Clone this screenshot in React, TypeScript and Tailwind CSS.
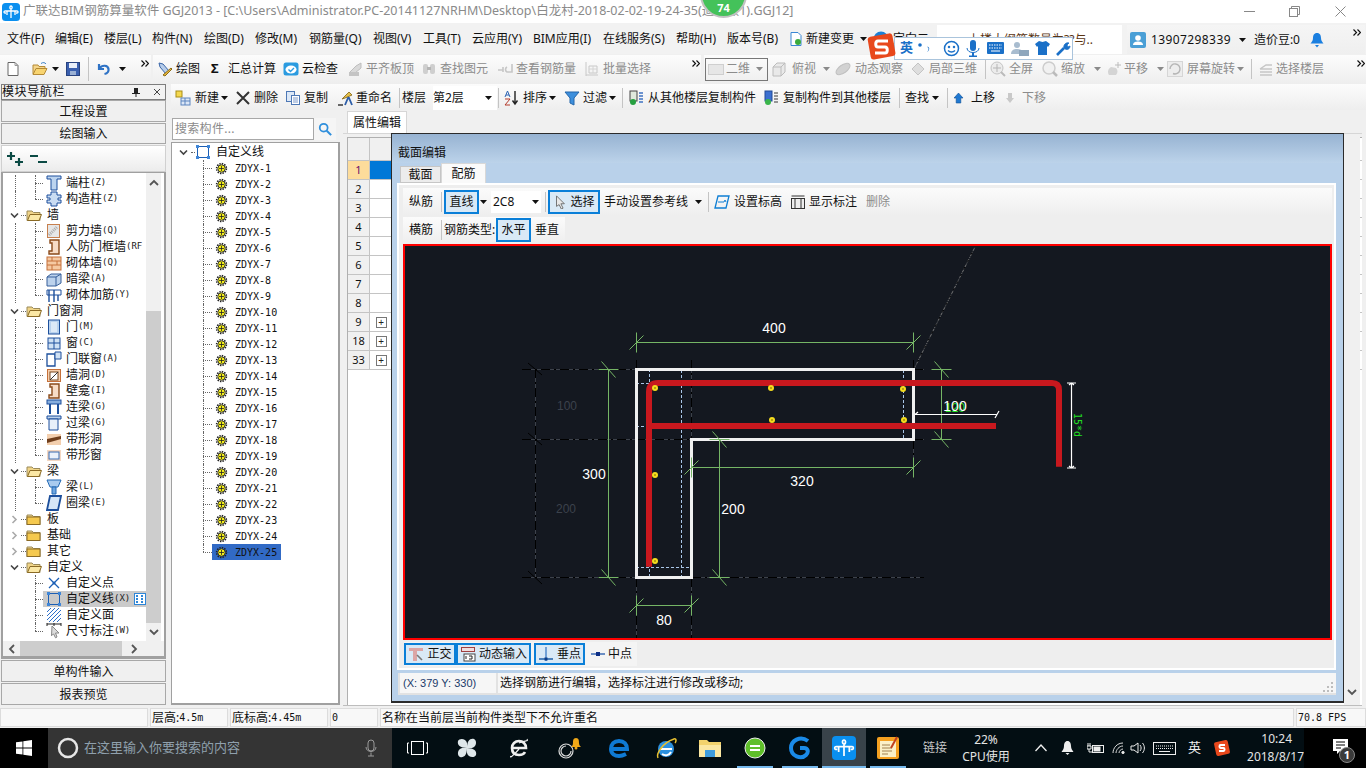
import React from "react";

const FONT = "[font-family:'Noto_Sans','Noto_Sans_CJK_SC',sans-serif]";
const MONO = "[font-family:'DejaVu_Sans_Mono','Liberation_Mono',monospace]";

function S({ s = 16, children, cls = "" }: { s?: number; children: React.ReactNode; cls?: string }) {
  return (
    <svg width={s} height={s} viewBox="0 0 16 16" className={"shrink-0 " + cls} fill="none">
      {children}
    </svg>
  );
}

const Caret = ({ cls = "", gray = false }: { cls?: string; gray?: boolean }) => (
  <svg width="7" height="4" viewBox="0 0 7 4" className={"shrink-0 " + cls}>
    <path d="M0 0h7L3.5 4z" fill={gray ? "#8a8a8a" : "#111"} />
  </svg>
);

const More = ({ cls = "" }: { cls?: string }) => (
  <svg width="8" height="7" viewBox="0 0 8 7" className={"shrink-0 " + cls} fill="none" stroke="#111" strokeWidth="1.2">
    <path d="M0.5 0.5l3 3-3 3M4.5 0.5l3 3-3 3" />
  </svg>
);

/* ---- toolbar icons ---- */
const icons: Record<string, React.ReactNode> = {
  doc: <><path d="M3 1.5h7l3 3v10H3z" fill="#fff" stroke="#666" /><path d="M10 1.5v3h3" stroke="#999" /></>,
  open: <><path d="M1 13V4h5l1 1.5h6V8" fill="#f4d58a" stroke="#b58a35" /><path d="M1 13.5l3-6h11l-3 6z" fill="#f8d470" stroke="#b58a35" /><path d="M9 2.5c2-1.5 4-1 5 .5" stroke="#3a7fc4" /></>,
  save: <><rect x="1.5" y="1.5" width="13" height="13" fill="#3a5fae" stroke="#27427f" /><rect x="4" y="2" width="8" height="5" fill="#e8eef8" /><rect x="5" y="10" width="6" height="4" fill="#9ab0d4" /></>,
  undo: <path d="M3 3v5h5M3.5 7.5C6 3.5 12 4 12.5 8c.3 2.5-1.5 4.5-4 5" stroke="#2f73c6" strokeWidth="2.2" />,
  draw: <><path d="M2 2l4 1 6 7-3 3-6-7z" fill="#b7cdea" stroke="#3a66a8" /><path d="M6 14l8-7 1 1-7 7z" fill="#e9b93f" stroke="#8c6b14" /></>,
  cloud: <><rect x="0.5" y="1.5" width="15" height="13" rx="2.5" fill="#2b9be0" /><ellipse cx="8" cy="8.5" rx="5.5" ry="4" fill="#fff" /><path d="M5.5 8.5l2 2 3.5-3.5" stroke="#2b9be0" strokeWidth="1.4" /></>,
  align: <><path d="M2 12l7-7 5-3v5l-6 5z" fill="#d9d9d9" stroke="#bdbdbd" /><rect x="2" y="11" width="10" height="4" fill="#c4c4c4" /></>,
  find: <><rect x="2" y="3" width="5" height="10" rx="2" fill="#cfcfcf" /><rect x="9" y="3" width="5" height="10" rx="2" fill="#cfcfcf" /><rect x="6" y="6" width="4" height="3" fill="#b5b5b5" /></>,
  rebar: <path d="M1 9h5M6 6v5M10 6c-2 1-2 4 0 5h5V3" stroke="#c6c6c6" strokeWidth="1.6" />,
  batch: <><path d="M2 1v14M2 14h12M5 5h8v7H5z" stroke="#c8c8c8" /><path d="M5 8h8M9 5v7" stroke="#d4d4d4" /></>,
  box: <><path d="M2 6l4-4h8v9l-4 4H2z" fill="#e9e9e9" stroke="#bcbcbc" /><path d="M2 6h8v9M10 6l4-4" stroke="#bcbcbc" /></>,
  orbit: <ellipse cx="8" cy="8" rx="8" ry="4" transform="rotate(-35 8 8)" fill="#d2d2d2" stroke="#c0c0c0" />,
  part3d: <path d="M2 8l6-6 6 6-6 6z" fill="#dedede" stroke="#c4c4c4" />,
  full: <><circle cx="7" cy="7" r="6" fill="#ececec" stroke="#c4c4c4" /><path d="M7 3v8M3 7h8" stroke="#b5b5b5" /><path d="M11 11l4 4" stroke="#bbb" strokeWidth="2" /></>,
  zoom: <><circle cx="7" cy="7" r="6" fill="#f1f1f1" stroke="#cdcdcd" strokeWidth="1.5" /><path d="M11 11l4 4" stroke="#bbb" strokeWidth="2.5" /></>,
  pan: <><path d="M3 14c-2-3-1-6 2-8l5 1c2 2 2 5 0 7z" fill="#d4d4d4" /><path d="M12 1v6M9 4h6" stroke="#bcbcbc" /></>,
  rotate: <><rect x="0.5" y="0.5" width="15" height="15" fill="#ededed" stroke="#d6d6d6" /><path d="M3 8a5 5 0 1 1 3 4.5" stroke="#b5b5b5" strokeWidth="1.4" /></>,
  floor: <path d="M2 8l6-4h6M2 8h12M2 11h12M2 14h12" stroke="#c6c6c6" strokeWidth="1.4" />,
  newc: <><rect x="1" y="1" width="6" height="6" fill="#f5d84f" stroke="#a88d17" /><rect x="6" y="8" width="9" height="7" fill="#dbe6f6" stroke="#5d85bf" /><path d="M6 11h9M10 8v7" stroke="#5d85bf" /></>,
  del: <path d="M2 2l12 12M14 2L2 14" stroke="#333" strokeWidth="2" />,
  copy: <><rect x="1.5" y="1.5" width="8" height="10" fill="#dce8f7" stroke="#4e78b5" /><rect x="6.5" y="5.5" width="8" height="9" fill="#fff" stroke="#4e78b5" /><path d="M8 8h5M8 10h5M8 12h5" stroke="#7c9acb" /></>,
  rename: <><path d="M5 9l7-7 3 3-7 3z" fill="#e3c04b" stroke="#96782a" /><path d="M8 15l3-7h1l3 7" stroke="#2e5ea8" strokeWidth="1.8" /><path d="M1 15h5" stroke="#666" strokeWidth="2" /></>,
  sort: <><path d="M12 1v12M9.5 10.5l2.5 3.5 2.5-3.5" stroke="#222" strokeWidth="1.4" /><path d="M2 7l2.5-6L7 7M3 5h3" stroke="#2b63b3" /><path d="M2 9h5l-5 6h5" stroke="#b33a2b" /></>,
  filter: <path d="M1 2h14l-5 6v7l-4-2V8z" fill="#3d8fdc" stroke="#2567ab" />,
  copyin: <><rect x="2" y="1" width="7" height="10" fill="#dfe9dc" stroke="#444" /><circle cx="5" cy="12" r="3" fill="#26a040" /><path d="M11 3h4M11 6h4M11 9h4M11 12h4" stroke="#3f73c2" strokeWidth="1.4" /></>,
  copyout: <><rect x="2" y="1" width="7" height="10" fill="#3b6fd0" stroke="#234a96" /><circle cx="5" cy="12" r="3" fill="#39b54a" /><path d="M11 3h4M11 6h4M11 9h4M11 12h4" stroke="#777" strokeWidth="1.4" /></>,
  up: <path d="M4.500 3l4.500 5H6.800v5H2.200V8H0z" fill="#1f78d1" stroke="#0d4f96" strokeWidth="0.6" />,
  down: <path d="M6 13L2 8h2V3h4v5h2z" fill="#c9c9c9" />,
  change: <><path d="M3 1.5h7l3 3v10H3z" fill="#fff" stroke="#3a87d4" /><circle cx="10" cy="11" r="3" fill="#3cab3c" /></>,
  search: <><circle cx="6.5" cy="6.5" r="4.5" stroke="#2f8fdc" strokeWidth="2" /><path d="M10 10l5 5" stroke="#2f8fdc" strokeWidth="2.4" /></>,
  cursor: <path d="M4 1l9 9H9l2.5 5-2 1-2.5-5L4 13z" fill="#e8e8e8" stroke="#666" />,
  level: <><path d="M1 14l3-12h11l-3 12z" stroke="#0f7fd4" strokeWidth="1.3" /><path d="M4 8h6l1-2 1 2" stroke="#0f7fd4" /></>,
  showdim: <><rect x="1.5" y="4.5" width="13" height="10" fill="#ededed" stroke="#333" /><path d="M1.5 2h13M5 5v9M11 5v9" stroke="#333" /></>,
  ortho: <><path d="M1 2h14v3H9v10H5V5H1z" fill="#dca5a5" /><path d="M9 9l5 5" stroke="#777" strokeWidth="1.6" /></>,
  dyn: <><rect x="1.5" y="1.5" width="13" height="4" fill="#f0dede" stroke="#a04040" /><rect x="4" y="8" width="11" height="7" fill="#fff" stroke="#444" /><path d="M6 13V10M9 10h3v3H9" stroke="#222" /></>,
  perp: <><path d="M8 1v14" stroke="#4f89cb" strokeWidth="1.5" /><path d="M1 13h14" stroke="#1f5fa8" strokeWidth="1.5" /><rect x="6.5" y="11.5" width="3" height="3" fill="#0d3d86" /></>,
  mid: <><path d="M1 8h14" stroke="#3e6db5" strokeWidth="1.5" /><rect x="6" y="6" width="4" height="4" fill="#0d2f86" /></>,
};
const I = ({ k, s = 16, cls = "" }: { k: string; s?: number; cls?: string }) => <S s={s} cls={cls}>{icons[k]}</S>;

function Tool({ k, label, w, gray, caret, gap = "ml-[3px]" }: { k?: string; label?: string; w: string; gray?: boolean; caret?: string; gap?: string }) {
  return (
    <div className={"flex items-center h-full shrink-0 relative " + w}>
      {k && <I k={k} />}
      {label && <span className={"whitespace-nowrap " + gap + " " + (gray ? "text-[#8c8c8c]" : "text-[#111]")}>{label}</span>}
      {caret && <Caret gray={gray} cls={caret} />}
    </div>
  );
}
const Sep = ({ cls = "" }: { cls?: string }) => <div className={"w-px h-[20px] bg-[#c4c4c4] shrink-0 " + cls} />;

/* ---- tree icons ---- */
const treeIcons: Record<string, React.ReactNode> = {
  duan: <><path d="M1 1h14v3h-4v11H5V4H1z" fill="#bcd4ef" stroke="#1c4f9c" /></>,
  gz: <path d="M5 1h6v3h4v3h-3v2h3v3h-4v3H5v-3H1V9h3V7H1V4h4z" fill="#c9dcf2" stroke="#1c4f9c" />,
  shear: <><rect x="1.5" y="1.5" width="12" height="13" fill="#e6e6e6" stroke="#c77f4d" /><path d="M3 12l8-8" stroke="#aaa" strokeDasharray="1 1" strokeWidth="3" /></>,
  door2: <path d="M4 1h9v14H3v-3h3V4H4z" fill="#f7dcc6" stroke="#8a4a1a" strokeWidth="1.4" />,
  brick: <><rect x="1" y="2" width="14" height="13" fill="#f5c9a2" stroke="#c5703a" /><path d="M1 6h14M1 10h14M6 2v4M11 6v4M6 10v5" stroke="#c5703a" /></>,
  an: <><path d="M1 6l4-3h10v9l-5 3H1z" fill="#bcd2ec" stroke="#365f9a" /><path d="M1 6h9v9M10 6l5-3" stroke="#365f9a" /></>,
  jj: <><path d="M1 3h14v5H1z" fill="#fff" stroke="#1c4f9c" /><path d="M3 3v12M8 3v12M12 8v6" stroke="#1c4f9c" strokeWidth="1.4" /></>,
  door: <><rect x="2.5" y="1" width="11" height="14" fill="#b9d2ee" stroke="#1c4f9c" /><rect x="5" y="3" width="6" height="10" fill="#dce9f7" /></>,
  win: <><rect x="2" y="3" width="12" height="11" fill="#cfe1f4" stroke="#1c4f9c" /><path d="M8 3v11M2 8h12" stroke="#1c4f9c" /></>,
  dw: <><path d="M1 3h8v12H1z" fill="#fff" stroke="#1c4f9c" strokeWidth="1.3" /><path d="M9 1h6v7H9z" fill="#cfe1f4" stroke="#1c4f9c" /></>,
  hole: <><rect x="1.5" y="2.5" width="13" height="12" fill="#f5cfae" stroke="#c5703a" /><rect x="4" y="5" width="8" height="8" fill="#fff" stroke="#7a4a20" /><path d="M4 13l8-8" stroke="#333" /></>,
  ll: <><rect x="1" y="1" width="14" height="4" fill="#87aede" stroke="#1c4f9c" /><path d="M4 5v10M12 5v10" stroke="#1c4f9c" strokeWidth="2" /></>,
  gl: <><path d="M1 1h14v3H1z" fill="#bcd2ec" stroke="#1c4f9c" /><path d="M3 4h9v11H3z" fill="#e8f0fa" stroke="#1c4f9c" /></>,
  bh: <><rect x="1" y="3" width="14" height="11" fill="#f3cfae" /><path d="M1 8l14-3v3L1 12z" fill="#6f3e1c" /></>,
  bw: <><rect x="1" y="3" width="14" height="11" fill="#f3d7c2" /><rect x="3" y="5" width="10" height="7" fill="#eaf1fb" stroke="#3b6db2" /></>,
  beam: <><path d="M1 1h14l-3 7H4z" fill="#a9cbef" stroke="#2269b4" /><path d="M6 8h4v7H6z" fill="#6ea6e0" stroke="#2269b4" /></>,
  ring: <path d="M4 1h11l-3 14H1z" fill="#d6e6f7" stroke="#1c4f9c" strokeWidth="1.8" />,
  point: <><path d="M3 3l10 10M13 3L3 13" stroke="#1c5fb5" strokeWidth="1.3" /><circle cx="8" cy="8" r="1.5" fill="#1c5fb5" /></>,
  line: <><rect x="2.5" y="2.5" width="11" height="11" stroke="#1c5fb5" /><rect x="1" y="1" width="3" height="3" fill="#3f86d8" /><rect x="12" y="1" width="3" height="3" fill="#3f86d8" /><rect x="1" y="12" width="3" height="3" fill="#3f86d8" /><rect x="12" y="12" width="3" height="3" fill="#3f86d8" /></>,
  face: <path d="M1 5l4-4M1 9l8-8M1 13L13 1M3 15L15 3M7 15l8-8M11 15l4-4" stroke="#2c6fca" />,
  dim: <><path d="M1 1h14M1 0v3M8 0v3M15 0v3" stroke="#222" /><path d="M6 3l7 7H9.5l1.5 4-1.5.8-2-4-2 2z" fill="#dcdcdc" stroke="#888" /></>,
  gear: <><circle cx="8" cy="8" r="4.5" fill="#f5ee1a" stroke="#222" /><circle cx="8" cy="8" r="6" stroke="#222" strokeWidth="2" strokeDasharray="1.8 1.3" /><path d="M8 5v6M5 8h6" stroke="#222" /></>,
};

const Folder = ({ open }: { open?: boolean }) => (
  <S>
    <path d="M1 13.5V4h5l1.5 1.5H14v8z" fill="#f0d488" stroke="#9a8a5a" />
    {open ? <path d="M1.5 13.5L4 7.5h11.5l-2.5 6z" fill="#fbe8a5" stroke="#8a6a25" /> : <rect x="1" y="6" width="13" height="7.5" fill="#f5c94f" stroke="#8a6a25" />}
  </S>
);

const Chev = ({ open }: { open?: boolean }) => (
  <svg width="9" height="9" viewBox="0 0 9 9" fill="none" strokeWidth="1.6" stroke={open ? "#444" : "#aaa"} className="shrink-0">
    {open ? <path d="M1 2.5l3.5 3.5L8 2.5" /> : <path d="M2.5 1L6 4.5 2.5 8" />}
  </svg>
);

const Guide = ({ last, w = "w-[11px]" }: { last?: boolean; w?: string }) => (
  <span className={"relative h-4 shrink-0 " + w}>
    <span className={"absolute left-0 top-0 border-l border-dotted border-[#666] " + (last ? "h-2" : "h-4")} />
    <span className="absolute left-0 top-2 w-full border-t border-dotted border-[#666]" />
  </span>
);

type Row =
  | { t: "g"; name: string; open?: boolean; more?: boolean }
  | { t: "c"; name: string; key2?: string; i: string; last?: boolean; sel?: boolean; more: boolean };

const c = (name: string, key2: string, i: string, more = true, last = false, sel = false): Row => ({ t: "c", name, key2, i, more, last, sel });
const navRows: Row[] = [
  c("端柱", "(Z)", "duan"),
  c("构造柱", "(Z)", "gz", true, true),
  { t: "g", name: "墙", open: true, more: true },
  c("剪力墙", "(Q)", "shear"),
  c("人防门框墙", "(RF", "door2"),
  c("砌体墙", "(Q)", "brick"),
  c("暗梁", "(A)", "an"),
  c("砌体加筋", "(Y)", "jj", true, true),
  { t: "g", name: "门窗洞", open: true, more: true },
  c("门", "(M)", "door"),
  c("窗", "(C)", "win"),
  c("门联窗", "(A)", "dw"),
  c("墙洞", "(D)", "hole"),
  c("壁龛", "(I)", "door2"),
  c("连梁", "(G)", "ll"),
  c("过梁", "(G)", "gl"),
  c("带形洞", "", "bh"),
  c("带形窗", "", "bw", true, true),
  { t: "g", name: "梁", open: true, more: true },
  c("梁", "(L)", "beam"),
  c("圈梁", "(E)", "ring", true, true),
  { t: "g", name: "板", more: true },
  { t: "g", name: "基础", more: true },
  { t: "g", name: "其它", more: true },
  { t: "g", name: "自定义", open: true },
  c("自定义点", "", "point", false),
  c("自定义线", "(X)", "line", false, false, true),
  c("自定义面", "", "face", false),
  c("尺寸标注", "(W)", "dim", false, true),
];

function NavRow({ r }: { r: Row }) {
  if (r.t === "g")
    return (
      <div className="flex h-4 items-center shrink-0">
        <span className="w-[7px] shrink-0" />
        <Chev open={r.open} />
        <span className="w-[2px] shrink-0" />
        <span className="w-[5px] border-t border-dotted border-[#666] shrink-0" />
        <Folder open={r.open} />
        <span className="ml-[5px] text-[12px] text-[#111] whitespace-nowrap">{r.name}</span>
      </div>
    );
  return (
    <div className="flex h-4 items-center shrink-0">
      <span className="w-[12px] shrink-0" />
      <span className={"w-[20px] h-4 shrink-0 " + (r.more ? "border-l border-dotted border-[#666]" : "")} />
      <Guide last={r.last} w="w-[8px]" />
      <span className={"pl-[3px] h-4 flex items-center grow min-w-0 overflow-hidden text-[12px] text-[#111] whitespace-nowrap " + (r.sel ? "bg-[#cacaca]" : "")}>
        <S>{treeIcons[r.i]}</S>
        <span className="ml-[4px] flex items-center">
          {r.name}
          {r.key2 && <span className={MONO + " text-[9px] text-[#222]"}>{r.key2}</span>}
        </span>
        {r.sel && (
          <svg width="12" height="12" viewBox="0 0 12 12" className="ml-auto shrink-0">
            <rect x="0.5" y="0.5" width="11" height="11" fill="#fff" stroke="#2e86d8" />
            <path d="M3 2v8M8 2v8" stroke="#2e86d8" strokeWidth="2" strokeDasharray="2 1" />
          </svg>
        )}
      </span>
    </div>
  );
}

const ScrollArrow = ({ d }: { d: "u" | "d" | "l" | "r" }) => (
  <svg width="10" height="10" viewBox="0 0 10 10" fill="none" stroke="#555" strokeWidth="1.8" className="shrink-0">
    {d === "u" && <path d="M1 7l4-4 4 4" />}
    {d === "d" && <path d="M1 3l4 4 4-4" />}
    {d === "l" && <path d="M7 1L3 5l4 4" />}
    {d === "r" && <path d="M3 1l4 4-4 4" />}
  </svg>
);

const NavBtn = ({ label, h = "h-[22px]" }: { label: string; h?: string }) => (
  <div className={"shrink-0 border border-[#a8a8a8] bg-[#f0f0f0] flex items-center justify-center text-[12px] text-[#111] " + h}>{label}</div>
);

function LeftNav() {
  return (
    <div className="w-[166px] shrink-0 flex flex-col pl-[1px] pb-[1px]">
      <div className="h-[16px] shrink-0 border border-[#7d7d7d] bg-[#f2f2f2] flex items-center text-[12px] text-[#111] leading-none">
        <span className="grow tracking-[0.6px]">模块导航栏</span>
        <svg width="8" height="9" viewBox="0 0 8 9" className="mr-[13px]"><path d="M2 0h4v5h2v1H4.5v3h-1V6H0V5h2z" fill="#222" /></svg>
        <svg width="8" height="8" viewBox="0 0 8 8" className="mr-[4px]" stroke="#444"><path d="M1 1l6 6M7 1L1 7" /></svg>
      </div>
      <NavBtn label="工程设置" h="h-[22px] pt-[2px]" />
      <NavBtn label="绘图输入" h="h-[21px] mt-[1px]" />
      <div className="h-[27px] mt-[1px] shrink-0 border border-[#d0d0d0] bg-gradient-to-b from-[#ffffff] to-[#ececec] flex items-center pl-[5px] gap-[5px]">
        <svg width="18" height="16" viewBox="0 0 18 16"><path d="M4 1v8M0 5h8M12 7v8M8 11h8" stroke="#0b4a44" strokeWidth="2.2" /></svg>
        <svg width="18" height="16" viewBox="0 0 18 16"><path d="M0 5h8M8 11h9" stroke="#0b4a44" strokeWidth="2.2" /></svg>
      </div>
      <div className="h-[487px] shrink-0 border-2 border-[#a0a0a0] border-t border-b-[3px] bg-white flex flex-col overflow-hidden">
        <div className="flex grow min-h-0">
          <div className="w-[143px] shrink-0 flex flex-col pt-[1px] overflow-hidden">
            <div className="h-[1px]" />
            {navRows.map((r, i) => (
              <NavRow key={i} r={r} />
            ))}
          </div>
          <div className="w-[15px] shrink-0 bg-[#f0f0f0] flex flex-col items-center">
            <div className="h-[20px] flex items-center"><ScrollArrow d="u" /></div>
            <div className="h-[118px] shrink-0" />
            <div className="w-full grow bg-[#cdcdcd]" />
            <div className="h-[18px] flex items-center"><ScrollArrow d="d" /></div>
          </div>
        </div>
        <div className="h-[15px] shrink-0 bg-[#f0f0f0] flex items-center">
          <div className="w-[17px] flex justify-center"><ScrollArrow d="l" /></div>
          <div className="w-[102px] h-full bg-[#cdcdcd]" />
          <div className="w-[24px] flex justify-center"><ScrollArrow d="r" /></div>
        </div>
      </div>
      <NavBtn label="单构件输入" h="h-[22px] mt-[1px] pt-[2px]" />
      <NavBtn label="报表预览" h="h-[22px] mt-[1px] pt-[1px]" />
    </div>
  );
}

function MidTree() {
  const rows = Array.from({ length: 25 }, (_, i) => i + 1);
  return (
    <div className="w-[169px] shrink-0 flex flex-col pl-[1px] mr-[3px]">
      <div className="h-[24px] mt-[8px] shrink-0 flex items-start">
        <div className="w-[142px] h-[22px] border border-[#a8a8a8] bg-white text-[12px] text-[#8b8b8b] flex items-center pl-[2px] tracking-[0.3px]">搜索构件...</div>
        <div className="w-[22px] h-[22px] flex items-center justify-center bg-[#f5f5f5]"><I k="search" s={14} /></div>
      </div>
      <div className="grow -ml-[1px] border-l border-t border-b-[2px] border-r-[2px] border-[#a0a0a0] bg-white pt-[1px] mb-[1px] overflow-hidden">
        <div className="flex items-center h-4 shrink-0">
          <span className="w-[7px] shrink-0" />
          <Chev open />
          <span className="w-[3px] shrink-0" />
          <span className="w-[4px] border-t border-dotted border-[#666] shrink-0" />
          <S>{treeIcons.line}</S>
          <span className="ml-[5px] text-[12px] text-[#111]">自定义线</span>
        </div>
        {rows.map((n) => (
          <div key={n} className="flex items-center h-4">
            <span className="w-[31px] shrink-0" />
            <Guide last={n === 25} w="w-[9px]" />
            <span className={"h-4 w-[69px] flex items-center pl-[3px] shrink-0 " + (n === 25 ? "bg-[#316ac5]" : "")}>
              <S s={13}>{treeIcons.gear}</S>
              <span className={"ml-[7px] text-[10px] text-[#111] whitespace-nowrap " + MONO}>ZDYX-{n}</span>
            </span>
          </div>
        ))}
      </div>
    </div>
  );
}

/* ---- CAD drawing ---- */
const G = "#75b565";
const HDim = ({ x1, x2, y }: { x1: number; x2: number; y: number }) => (
  <g stroke={G} strokeWidth="1">
    <line x1={x1} x2={x2} y1={y} y2={y} />
    {[x1, x2].map((x) => (
      <g key={x}>
        <line x1={x} x2={x} y1={y - 10} y2={y + 10} />
        <line x1={x - 7} y1={y + 7} x2={x + 7} y2={y - 7} />
      </g>
    ))}
  </g>
);
const VDim = ({ x, y1, y2 }: { x: number; y1: number; y2: number }) => (
  <g stroke={G} strokeWidth="1">
    <line x1={x} x2={x} y1={y1} y2={y2} />
    {[y1, y2].map((y) => (
      <g key={y}>
        <line x1={x - 10} x2={x + 10} y1={y} y2={y} />
        <line x1={x - 7} y1={y - 8} x2={x + 7} y2={y + 8} />
      </g>
    ))}
  </g>
);
const DashDot = ({ x1, y1, x2, y2 }: { x1: number; y1: number; x2: number; y2: number }) => (
  <g strokeWidth="1">
    <line x1={x1} y1={y1} x2={x2} y2={y2} stroke="#3d424b" />
    <line x1={x1} y1={y1} x2={x2} y2={y2} stroke="#000" strokeDasharray="9 4 2 4" />
  </g>
);
const Blue = ({ x1, y1, x2, y2 }: { x1: number; y1: number; x2: number; y2: number }) => (
  <line x1={x1} y1={y1} x2={x2} y2={y2} stroke="#a9c6e8" strokeWidth="1" strokeDasharray="3 2" />
);
const Txt = ({ x, y, c: col = "#fff", s = 14, children }: { x: number; y: number; c?: string; s?: number; children: string }) => (
  <text x={x} y={y} fill={col} fontSize={s} textAnchor="middle" fontFamily="'Liberation Sans', sans-serif">{children}</text>
);

function Drawing() {
  const dots: [number, number][] = [[655, 388], [771, 388], [772, 420], [655, 475], [655, 561], [903, 389], [904, 420]];
  return (
    <svg viewBox="405 246 925 392" className="block w-full h-full bg-[#141820]">
      <DashDot x1={522} y1={369.5} x2={636} y2={369.5} />
      <DashDot x1={522} y1={439.5} x2={691} y2={439.5} />
      <DashDot x1={522} y1={577.5} x2={636} y2={577.5} />
      <DashDot x1={692} y1={577.5} x2={924} y2={577.5} />
      <DashDot x1={535.5} y1={369} x2={535.5} y2={577} />
      <g stroke="#000"><line x1={528} y1={363} x2={542} y2={375} /><line x1={528} y1={433} x2={542} y2={445} /><line x1={528} y1={571} x2={542} y2={584} /></g>
      <DashDot x1={636.5} y1={360} x2={636.5} y2={369} />
      <DashDot x1={691.5} y1={360} x2={691.5} y2={439} />
      <DashDot x1={636.5} y1={578} x2={636.5} y2={638} />
      <DashDot x1={691.5} y1={578} x2={691.5} y2={638} />
      <DashDot x1={913.5} y1={360} x2={913.5} y2={369} />
      <DashDot x1={913.5} y1={440} x2={913.5} y2={470} />
      <DashDot x1={914} y1={369.5} x2={924} y2={369.5} />
      <DashDot x1={914} y1={439.5} x2={924} y2={439.5} />
      <line x1={914} y1={369} x2={975} y2={247} stroke="#777" strokeDasharray="3 1 1 1" />
      <line x1={914} y1={369} x2={975} y2={247} stroke="#000" strokeDasharray="2 6" />

      <Blue x1={649.5} y1={369} x2={649.5} y2={578} />
      <Blue x1={681.5} y1={370} x2={681.5} y2={578} />
      <Blue x1={636} y1={567.5} x2={691} y2={567.5} />
      <Blue x1={636} y1={383.5} x2={650} y2={383.5} />
      <Blue x1={636} y1={426.5} x2={646} y2={426.5} />
      <Blue x1={903.5} y1={370} x2={903.5} y2={439} />

      <path d="M636.5 369.5H913.5V439.5H691.5V577.5H636.5Z" fill="none" stroke="#f0f0f0" strokeWidth="3" />

      <HDim x1={636.5} x2={913.5} y={342.5} />
      <VDim x={608.5} y1={369.5} y2={577.5} />
      <VDim x={719.5} y1={439.5} y2={577.5} />
      <HDim x1={691.5} x2={913.5} y={467.5} />
      <HDim x1={636.5} x2={691.5} y={605.5} />
      <VDim x={941.5} y1={369.5} y2={439.5} />

      <path d="M649 566.7V392Q649 383 658 383H1052Q1059 383 1059 390V466.7" fill="none" stroke="#c8181e" strokeWidth="6" />
      <line x1={649} y1={426} x2={996} y2={426} stroke="#c8181e" strokeWidth="6" />

      {dots.map(([x, y]) => (
        <g key={x + "-" + y}>
          <circle cx={x} cy={y} r={3} fill="#f5dc1e" />
          <circle cx={x} cy={y} r={0.8} fill="#6a5a00" />
        </g>
      ))}

      <Txt x={774} y={333}>400</Txt>
      <Txt x={594} y={479}>300</Txt>
      <Txt x={733} y={514}>200</Txt>
      <Txt x={802} y={486}>320</Txt>
      <Txt x={664} y={625}>80</Txt>
      <Txt x={567} y={410} c="#3c424c" s={12}>100</Txt>
      <Txt x={566} y={513} c="#3c424c" s={12}>200</Txt>

      <g stroke="#fff" strokeWidth="1.2" fill="none">
        <line x1={915} x2={997} y1={414.5} y2={414.5} />
        <path d="M918 412l-3 2.5M995 418l4-7" />
        <line x1={1071.5} x2={1071.5} y1={383} y2={468} />
        <path d="M1067 383h9M1067 468h9M1069 385l2.5-2 2.5 2M1069 466l2.5 2 2.5-2" />
      </g>
      <Txt x={955} y={412} c="#22e022" s={12}>120</Txt>
      <Txt x={955} y={411}>100</Txt>
      <text x={1077.5} y={428.5} fill="#22e022" fontSize="10" fontFamily="'DejaVu Sans Mono', monospace" transform="rotate(90 1077.5 425)" textAnchor="middle">15*d</text>
    </svg>
  );
}

const BlueBtn = ({ children, cls = "" }: { children: React.ReactNode; cls?: string }) => (
  <div className={"h-full border-2 border-[#0a7fd8] bg-[#d9e9f6] flex items-center justify-center shrink-0 " + cls}>{children}</div>
);

function DialogWin() {
  return (
    <div className="absolute left-[48px] top-[23px] w-[953px] h-[570px] border border-[#2b2b2b] border-b-2 bg-[#b9d1ea] flex flex-col">
      <div className="h-[29px] shrink-0 bg-gradient-to-b from-[#97b3d2] to-[#bcd3ea] flex items-center pl-[6px] pt-[8px] text-[12px] text-[#111]">截面编辑</div>
      <div className="ml-[5px] mr-[7px] grow flex flex-col min-h-0">
        <div className="h-[20px] shrink-0 flex items-end text-[12px] text-[#111]">
          <div className="ml-[3px] w-[41px] h-[17px] bg-[#ececec] border border-[#c6c6c6] flex items-center justify-center">截面</div>
          <div className="w-[45px] h-[20px] bg-[#fafafa] border border-[#d8d8d8] border-b-0 flex items-center justify-center">配筋</div>
        </div>
        <div className="h-[487px] shrink-0 bg-[#eeeeee] border-2 border-white flex flex-col text-[12px] text-[#111]">
          <div className="h-[28px] shrink-0 ml-[4px] mr-[2px] mt-[3px] bg-gradient-to-b from-[#fbfbfb] to-[#eeeeee] flex items-center py-[2px]">
            <span className="w-[38px] pl-[6px] shrink-0">纵筋</span>
            <Sep />
            <BlueBtn cls="ml-[2px] w-[35px]">直线</BlueBtn>
            <Caret cls="ml-[1px]" />
            <div className="ml-[4px] h-[22px] w-[50px] bg-white flex items-center pl-[2px] shrink-0 text-[12px]">2C8<Caret cls="ml-auto mr-[2px]" /></div>
            <Sep cls="ml-[4px]" />
            <BlueBtn cls="ml-[2px] w-[52px] gap-[3px]"><S s={14}>{icons.cursor}</S>选择</BlueBtn>
            <span className="ml-[4px] whitespace-nowrap">手动设置参考线</span>
            <Caret cls="ml-[7px]" />
            <Sep cls="ml-[6px]" />
            <I k="level" cls="ml-[5px]" />
            <span className="ml-[4px] whitespace-nowrap">设置标高</span>
            <I k="showdim" cls="ml-[8px]" />
            <span className="ml-[3px] whitespace-nowrap">显示标注</span>
            <span className="ml-[9px] whitespace-nowrap text-[#8c8c8c]">删除</span>
          </div>
          <div className="h-[26px] shrink-0 ml-[4px] mt-[1px] w-[162px] bg-gradient-to-b from-[#fbfbfb] to-[#eeeeee] flex items-center py-[1px]">
            <span className="w-[38px] pl-[6px] shrink-0">横筋</span>
            <Sep />
            <span className="ml-[2px] w-[52px] shrink-0 whitespace-nowrap">钢筋类型:</span>
            <BlueBtn cls="w-[35px]">水平</BlueBtn>
            <span className="ml-[4px]">垂直</span>
          </div>
          <div className="h-[396px] w-[929px] shrink-0 ml-[4px] border-2 border-[#ff0000] mt-[1px]">
            <Drawing />
          </div>
          <div className="h-[24px] shrink-0 ml-[5px] mt-[2px] w-[233px] bg-[#f4f4f4] flex items-center py-[1px]">
            <BlueBtn cls="w-[52px] gap-[3px]"><I k="ortho" />正交</BlueBtn>
            <BlueBtn cls="w-[75px] gap-[3px]"><I k="dyn" />动态输入</BlueBtn>
            <BlueBtn cls="ml-[3px] w-[51px] gap-[3px]"><I k="perp" />垂点</BlueBtn>
            <I k="mid" cls="ml-[5px]" />
            <span className="ml-[2px]">中点</span>
          </div>
        </div>
        <div className="h-[22px] mt-[3px] ml-[1px] shrink-0 flex text-[12px] bg-[#f6f6f6] border-2 border-[#e2e2e2] border-t-0 border-r-0">
          <div className="w-[98px] shrink-0 flex items-center pl-[3px] text-[#1a3a6a] text-[11px] whitespace-nowrap border-r-2 border-[#e2e2e2] [font-family:'Liberation_Sans']">(X: 379 Y: 330)</div>
          <div className="grow flex items-center pl-[2px] text-[#111] relative">
            选择钢筋进行编辑，选择标注进行修改或移动;
            <svg width="12" height="12" viewBox="0 0 12 12" className="ml-auto mr-[2px] mt-[8px]" fill="#bdbdbd"><rect x="9" y="1" width="2" height="2" /><rect x="5" y="5" width="2" height="2" /><rect x="9" y="5" width="2" height="2" /><rect x="1" y="9" width="2" height="2" /><rect x="5" y="9" width="2" height="2" /><rect x="9" y="9" width="2" height="2" /></svg>
          </div>
        </div>
      </div>
    </div>
  );
}

function RightPanel() {
  const labels = ["1", "2", "3", "4", "5", "6", "7", "8", "9", "18", "33"];
  return (
    <div className="relative grow mr-[4px] border-b border-[#bdbdbd] flex flex-col min-w-0">
      <div className="h-[22px] mt-[2px] shrink-0 border-b border-[#d6d6d6] flex items-end pl-[4px]">
        <div className="w-[60px] h-[22px] bg-white border border-[#d6d6d6] border-b-0 flex items-center justify-center text-[12px] text-[#111]">属性编辑</div>
      </div>
      <div className="grow bg-white ml-[4px] border-l border-t border-[#b0b0b0] flex flex-col overflow-hidden mt-[3px]">
        <div className="h-[23px] shrink-0 flex border-b border-[#c4c4c4]">
          <div className="w-[22px] bg-[#f0f0f0] border-r border-[#c4c4c4]" />
          <div className="w-[22px] bg-[#f0f0f0]" />
        </div>
        {labels.map((l, i) => (
          <div key={l} className="h-[19px] shrink-0 flex border-b border-[#c4c4c4]">
            <div className={"w-[22px] border-r border-[#c4c4c4] text-[11px] flex items-center justify-center " + (i === 0 ? "bg-[#fddc9b] text-[#6a0f6a]" : "bg-[#f0f0f0] text-[#111]")}>{l}</div>
            <div className={"w-[22px] flex items-center justify-center " + (i === 0 ? "bg-[#0078d7]" : "bg-white")}>
              {i > 7 && <span className="w-[11px] h-[11px] border border-[#777] bg-white text-[10px] leading-[9px] text-center text-[#222]">+</span>}
            </div>
          </div>
        ))}
        <div className="grow flex justify-end" />
      </div>
      <div className="absolute right-[2px] top-[26px] bottom-0 w-[16px] bg-[#f0f0f0] flex flex-col justify-end items-center pb-[8px]">
        <ScrollArrow d="d" />
      </div>
      <DialogWin />
    </div>
  );
}

const Cell = ({ w, children }: { w: string; children?: React.ReactNode }) => (
  <div className={"h-full border border-[#dcdcdc] bg-[#f8f8f8] shrink-0 flex items-center pl-[1px] text-[12px] text-[#111] whitespace-nowrap overflow-hidden " + w}>{children}</div>
);
const M = ({ children }: { children: string }) => <span className={MONO + " text-[10px]"}>{children}</span>;

const MenuItem = ({ w, label }: { w: string; label: string }) => <div className={"shrink-0 whitespace-nowrap text-[#111] " + w}>{label}</div>;

function TaskIcon({ w, children, cls = "" }: { w: string; children: React.ReactNode; cls?: string }) {
  return <div className={"h-full flex items-center justify-center shrink-0 relative " + w + " " + cls}>{children}</div>;
}
const Under = ({ w = "w-[36px]" }: { w?: string }) => <span className={"absolute bottom-0 left-1/2 -translate-x-1/2 h-[2px] bg-[#76b9ed] " + w} />;

export default function App() {
  return (
    <div className={"relative w-[1366px] h-[768px] overflow-hidden bg-[#f0f0f0] flex flex-col " + FONT}>
      {/* title */}
      <div className="h-[23px] shrink-0 bg-white flex items-center pl-[2px] text-[12.5px] text-[#8a8a8a] whitespace-nowrap">
        <svg width="18" height="18" viewBox="0 0 18 18" className="shrink-0">
          <rect width="18" height="18" rx="3.5" fill="#0a8fef" />
          <path d="M9 3c-1.5 0-1.5 3 0 3s1.5-3 0-3zM9 6v9M4 10c-1 0-2 .3-2-1s1.500-1 2-1h10c1 0 2-.3 2 1s-1 1-2 1M5 8v4M13 8v4" stroke="#fff" strokeWidth="1.3" fill="none" />
        </svg>
        <span className="ml-[3px]">广联达BIM钢筋算量软件 GGJ2013 - [C:\Users\Administrator.PC-20141127NRHM\Desktop\白龙村-2018-02-02-19-24-35(造价版1).GGJ12]</span>
        <div className="ml-auto flex items-center text-[#666]">
          <svg width="11" height="11" viewBox="0 0 11 11" className="mr-[34px]" stroke="#888"><path d="M0 5.500h11" /></svg>
          <svg width="11" height="11" viewBox="0 0 11 11" className="mr-[35px]" stroke="#888" fill="none"><rect x="0.5" y="2.5" width="8" height="8" /><path d="M2.500 2.500v-2h8v8h-2" /></svg>
          <svg width="11" height="11" viewBox="0 0 11 11" className="mr-[20px]" stroke="#888"><path d="M0.500 0.500l10 10M10.500 0.500l-10 10" /></svg>
        </div>
      </div>
      {/* menu */}
      <div className="h-[31px] shrink-0 bg-[#f2f2f2] flex items-center pl-[7px] text-[12px]">
        <MenuItem w="w-[48px]" label="文件(F)" />
        <MenuItem w="w-[49px]" label="编辑(E)" />
        <MenuItem w="w-[48px]" label="楼层(L)" />
        <MenuItem w="w-[52px]" label="构件(N)" />
        <MenuItem w="w-[51px]" label="绘图(D)" />
        <MenuItem w="w-[54px]" label="修改(M)" />
        <MenuItem w="w-[64px]" label="钢筋量(Q)" />
        <MenuItem w="w-[50px]" label="视图(V)" />
        <MenuItem w="w-[49px]" label="工具(T)" />
        <MenuItem w="w-[61px]" label="云应用(Y)" />
        <MenuItem w="w-[70px]" label="BIM应用(I)" />
        <MenuItem w="w-[73px]" label="在线服务(S)" />
        <MenuItem w="w-[51px]" label="帮助(H)" />
        <MenuItem w="w-[61px]" label="版本号(B)" />
        <div className="w-[85px] shrink-0 flex items-center">
          <I k="change" />
          <span className="ml-[2px] whitespace-nowrap text-[#111]">新建变更</span>
          <Caret cls="ml-[6px]" />
        </div>
        <div className="w-[64px] shrink-0 flex items-center">
          <svg width="16" height="16" viewBox="0 0 16 16"><circle cx="8" cy="8" r="7.500" fill="#1a7fd6" /></svg>
          <span className="ml-[4px] whitespace-nowrap text-[#111]">定向二</span>
        </div>
        <div className="w-[185px] h-[29px] mt-[2px] shrink-0 bg-white pl-[31px] flex items-center text-[#5a3412] whitespace-nowrap">上楼大纲筋数量为??与..</div>
        <div className="w-[238px] h-[29px] mt-[2px] ml-[5px] shrink-0 bg-gradient-to-b from-[#f5f5f5] to-[#efefef] flex items-center pl-[3px]">
          <svg width="16" height="16" viewBox="0 0 16 16" className="shrink-0"><rect width="16" height="16" rx="2" fill="#4a9fd6" /><circle cx="8" cy="6" r="2.800" fill="#fff" /><path d="M3 13c0-3 3-3.500 5-3.500s5 .5 5 3.500z" fill="#fff" /></svg>
          <span className="ml-[5px] text-[#111] tracking-[0.4px]">13907298339</span>
          <Caret cls="ml-[8px]" />
          <span className="ml-[8px] text-[#111] whitespace-nowrap">造价豆:0</span>
          <svg width="16" height="16" viewBox="0 0 16 16" className="ml-[9px] shrink-0"><path d="M8 1c3 0 4 2.500 4 5 0 3 1.500 4 2.500 5.500h-13C2.500 10 4 9 4 6c0-2.500 1-5 4-5z" fill="#1a7fe0" /><path d="M6 13h4l-2 2.500z" fill="#1a7fe0" /></svg>
          <More cls="ml-auto mr-[4px] mb-[14px]" />
        </div>
      </div>
      {/* toolbar */}
      <div className="h-[30px] shrink-0 flex items-center text-[12px] bg-[#f0f0f0]">
        <div className="w-[151px] h-[29px] shrink-0 bg-gradient-to-b from-[#fcfcfc] to-[#eeeeee] flex items-center pl-[5px]">
          <I k="doc" />
          <I k="open" cls="ml-[11px]" />
          <Caret cls="ml-[4px]" />
          <I k="save" cls="ml-[6px]" />
          <Sep cls="ml-[7px] h-[24px]" />
          <I k="undo" cls="ml-[7px]" />
          <Caret cls="ml-[7px]" />
          <More cls="ml-[15px] mb-[12px]" />
        </div>
        <div className="w-[548px] h-[29px] ml-[2px] shrink-0 bg-gradient-to-b from-[#fcfcfc] to-[#eeeeee] flex items-center pl-[4px]">
          <Tool k="draw" label="绘图" w="w-[54px]" />
          <div className="w-[72px] shrink-0 flex items-center text-[#111]"><span className="w-[17px] font-bold text-[13px]">Σ</span>汇总计算</div>
          <Tool k="cloud" label="云检查" w="w-[64px]" />
          <Tool k="align" label="平齐板顶" w="w-[74px]" gray />
          <Tool k="find" label="查找图元" w="w-[76px]" gray />
          <Tool k="rebar" label="查看钢筋量" w="w-[87px]" gray />
          <Tool k="batch" label="批量选择" w="w-[108px]" gray />
          <More cls="mb-[12px]" />
        </div>
        <div className="grow h-[29px] ml-[3px] bg-gradient-to-b from-[#fcfcfc] to-[#eeeeee] flex items-center">
          <div className="w-[63px] h-[23px] ml-[1px] mr-[3px] shrink-0 border border-[#777] flex items-center pl-[2px] text-[#8c8c8c]">
            <span className="w-[16px] h-[11px] bg-[#e6e6e6] border border-[#cfcfcf] shrink-0" />
            <span className="ml-[2px]">二维</span>
            <Caret gray cls="ml-auto mr-[4px]" />
          </div>
          <Tool k="box" label="俯视" w="w-[64px]" gray gap="ml-[5px]" caret="ml-[7px]" />
          <Tool k="orbit" label="动态观察" w="w-[75px]" gray gap="ml-[4px]" />
          <Tool k="part3d" label="局部三维" w="w-[75px]" gray gap="ml-[3px]" />
          <Sep cls="mr-[4px]" />
          <Tool k="full" label="全屏" w="w-[52px]" gray gap="ml-[3px]" />
          <Tool k="zoom" label="缩放" w="w-[64px]" gray gap="ml-[3px]" caret="ml-[9px]" />
          <Tool k="pan" label="平移" w="w-[61px]" gray gap="ml-[2px]" caret="ml-[9px]" />
          <Tool k="rotate" label="屏幕旋转" w="w-[84px]" gray gap="ml-[4px]" caret="ml-[2px]" />
          <Sep cls="mr-[6px]" />
          <Tool k="floor" label="选择楼层" w="w-[90px]" gray gap="ml-[2px]" />
          <More cls="ml-[9px] mb-[12px]" />
        </div>
      </div>
      {/* body */}
      <div className="h-[622px] shrink-0 flex">
        <LeftNav />
        <div className="w-[5px] shrink-0" />
        <div className="grow flex flex-col min-w-0">
          <div className="h-[26px] shrink-0 bg-gradient-to-b from-[#fcfcfc] to-[#eeeeee] flex items-center pl-[4px] pt-[2px] text-[12px]">
            <Tool k="newc" label="新建" w="w-[60px]" caret="ml-[2px]" gap="ml-[4px]" />
            <Tool k="del" label="删除" w="w-[50px]" gap="ml-[3px]" />
            <Tool k="copy" label="复制" w="w-[52px]" gap="ml-[3px]" />
            <Tool k="rename" label="重命名" w="w-[62px]" gap="ml-[3px]" />
            <Sep />
            <span className="ml-[2px] w-[31px] shrink-0 text-[#111]">楼层</span>
            <div className="w-[64px] h-[24px] shrink-0 bg-white flex items-center text-[#111] relative">第2层<Caret cls="absolute right-[5px] top-[10px]" /></div>
            <Sep cls="ml-[1px] mr-[4px]" />
            <Tool k="sort" label="排序" w="w-[61px]" gap="ml-[4px]" caret="ml-[2px]" />
            <Tool k="filter" label="过滤" w="w-[58px]" gap="ml-[3px]" caret="ml-[2px]" />
            <Sep cls="mr-[5px]" />
            <Tool k="copyin" label="从其他楼层复制构件" w="w-[135px]" gap="ml-[4px]" />
            <Tool k="copyout" label="复制构件到其他楼层" w="w-[136px]" gap="ml-[4px]" />
            <Sep cls="mr-[5px]" />
            <Tool label="查找" w="w-[42px]" gap="ml-0" caret="ml-[3px]" />
            <Sep cls="mr-[6px]" />
            <Tool k="up" label="上移" w="w-[50px]" gap="ml-[1px]" />
            <Tool k="down" label="下移" w="w-[50px]" gray gap="ml-[2px]" />
          </div>
          <div className="grow flex min-h-0">
            <MidTree />
            <RightPanel />
          </div>
        </div>
      </div>
      <div className="h-[2px] shrink-0" />
      {/* status */}
      <div className="h-[20px] shrink-0 flex gap-[2px] pb-[1px]">
        <Cell w="w-[148px]" />
        <Cell w="w-[78px]">层高:<M>4.5m</M></Cell>
        <Cell w="w-[98px]">底标高:<M>4.45m</M></Cell>
        <Cell w="w-[48px]"><M>0</M></Cell>
        <Cell w="w-[914px]">名称在当前层当前构件类型下不允许重名</Cell>
        <Cell w="w-[70px]"><M>70.8 FPS</M></Cell>
      </div>
      {/* taskbar */}
      <div className="h-[40px] shrink-0 bg-[#030e13] flex items-center text-white">
        <TaskIcon w="w-[48px]" cls="bg-black">
          <svg width="16" height="16" viewBox="0 0 16 16" fill="#fff"><path d="M0 2.300l6.500-.9v6.200H0zM7.300 1.300L16 0v7.600H7.300zM0 8.400h6.500v6.200L0 13.700zM7.300 8.400H16V16l-8.700-1.200z" /></svg>
        </TaskIcon>
        <div className="w-[344px] h-full bg-[#343434] flex items-center shrink-0 pl-[9px]">
          <svg width="22" height="22" viewBox="0 0 22 22" fill="none"><circle cx="11" cy="11" r="9" stroke="#e6e6e6" strokeWidth="2.500" /></svg>
          <span className="ml-[5px] text-[13px] text-[#8fa0ad] whitespace-nowrap">在这里输入你要搜索的内容</span>
          <svg width="12" height="18" viewBox="0 0 12 18" fill="none" stroke="#9a9a9a" className="ml-auto mr-[15px]"><rect x="3" y="1" width="6" height="11" rx="3" /><path d="M1 8c0 6 10 6 10 0M6 13.500V17M3 17h6" /></svg>
        </div>
        <TaskIcon w="w-[50px]">
          <svg width="21" height="16" viewBox="0 0 21 16" fill="none" stroke="#fff"><rect x="4.500" y="1.500" width="12" height="13" /><path d="M2 3H0.500v10H2M19 3h1.500v10H19" /></svg>
        </TaskIcon>
        <TaskIcon w="w-[50px]">
          <svg width="22" height="22" viewBox="0 0 22 22" fill="#dfe7ea"><path d="M11 11C4 11 1 8 2 4c1-3 8-3 9 2zM11 11c7 0 10 3 9 7-1 3-8 3-9-2zM11 11c0-7 3-10 7-9 3 1 3 8-2 9zM11 11c0 7-3 10-7 9-3-1-3-8 2-9z" /></svg>
        </TaskIcon>
        <TaskIcon w="w-[54px]">
          <svg width="22" height="24" viewBox="0 0 22 24" fill="none" stroke="#f0f0f0" strokeWidth="2.600"><path d="M4 12h14c0-4-3-7-7-7s-7 3-7 7c0 5 3 7 7 7 3 0 5-1 6-3" /><path d="M3 20C1 23 6 19 11 13M19 3c2 3-3 1-8 4" strokeWidth="1.200" /></svg>
        </TaskIcon>
        <TaskIcon w="w-[48px]">
          <svg width="26" height="24" viewBox="0 0 26 24" fill="none"><circle cx="9" cy="15" r="7" stroke="#ddd" strokeWidth="1.200" /><path d="M9 10a5 5 0 1 0 5 5" stroke="#ddd" strokeWidth="1.200" /><path d="M19 2c3 0 3 3 3 5s1 3 2 4H14c1-1 2-2 2-4s0-5 3-5z" fill="#f0a818" /><circle cx="19" cy="12" r="1.500" fill="#f0a818" /></svg>
        </TaskIcon>
        <TaskIcon w="w-[50px]">
          <svg width="20" height="20" viewBox="0 0 20 20" fill="none" stroke="#0f7ad4" strokeWidth="4"><path d="M2 11h16C18 6 15 3 10 3S2 6 2 11c0 5 4 7 8 7 3 0 5-1 7-2" /></svg>
        </TaskIcon>
        <TaskIcon w="w-[44px]">
          <svg width="24" height="24" viewBox="0 0 24 24" fill="none"><circle cx="12" cy="13" r="8" fill="#2b90e0" /><path d="M6 13h12M8 18a6 6 0 0 0 9-2" stroke="#fff" strokeWidth="2" /><path d="M4 22C2 18 8 7 20 3c3-1 2 3 1 4" stroke="#e8c030" strokeWidth="1.500" /></svg>
        </TaskIcon>
        <TaskIcon w="w-[44px]">
          <svg width="22" height="20" viewBox="0 0 22 20"><path d="M0 2h8l2 2h12v15H0z" fill="#f2d26d" /><path d="M0 7h22v12H0z" fill="#fbe7a2" /><rect x="6" y="12" width="10" height="7" fill="#3e9bdc" /></svg>
        </TaskIcon>
        <TaskIcon w="w-[46px]">
          <Under />
          <svg width="22" height="22" viewBox="0 0 22 22"><circle cx="11" cy="11" r="10" fill="#5fbf2a" stroke="#eee" /><rect x="6" y="8" width="10" height="2" fill="#fff" /><rect x="6" y="12" width="10" height="2" fill="#fff" /></svg>
        </TaskIcon>
        <TaskIcon w="w-[44px]">
          <Under />
          <svg width="24" height="24" viewBox="0 0 24 24" fill="none"><path d="M20 5C12-1 3 5 3 12c0 8 10 12 15 7 3-3 2-7-2-7h-4" stroke="#1a8ae8" strokeWidth="4" /></svg>
        </TaskIcon>
        <TaskIcon w="w-[44px]" cls="bg-[#39434a]">
          <Under w="w-[44px]" />
          <svg width="24" height="24" viewBox="0 0 18 18"><rect width="18" height="18" rx="3" fill="#0a8fef" /><path d="M9 3c-1.500 0-1.500 3 0 3s1.500-3 0-3zM9 6v9M4 10c-1 0-2 .3-2-1s1.500-1 2-1h10c1 0 2-.3 2 1s-1 1-2 1M5 8v4M13 8v4" stroke="#fff" strokeWidth="1.300" fill="none" /></svg>
        </TaskIcon>
        <TaskIcon w="w-[44px]">
          <Under />
          <svg width="24" height="24" viewBox="0 0 24 24"><rect x="1" y="1" width="22" height="22" rx="2" fill="#f5a020" /><rect x="4" y="5" width="16" height="16" fill="#fbf0c8" /><path d="M6 9h8M6 12h10M6 15h10M6 18h6" stroke="#a08050" /><path d="M21 1l-6 11" stroke="#c04020" strokeWidth="2" /></svg>
        </TaskIcon>
        <div className="w-[48px] ml-[13px] text-[12px] text-[#c8c8c8] shrink-0">链接</div>
        <div className="w-[62px] -ml-[16px] shrink-0 flex flex-col items-center text-[12px] leading-[17px] text-[#e4e4e4] whitespace-nowrap">
          <span>22%</span>
          <span>CPU使用</span>
        </div>
        <div className="flex items-center ml-[18px]">
          <svg width="12" height="8" viewBox="0 0 12 8" fill="none" stroke="#eee" strokeWidth="1.300"><path d="M0.500 7l5.500-6 5.500 6" /></svg>
          <svg width="13" height="14" viewBox="0 0 13 14" fill="#eee" className="ml-[14px]"><path d="M6.500 0C9 0 10 2.500 10 5c0 3 1.500 4 2.500 6H.500C1.500 9 3 8 3 5c0-2.500 1-5 3.500-5zM4.500 12h4l-2 2z" /></svg>
          <svg width="17" height="11" viewBox="0 0 17 11" fill="none" stroke="#eee" className="ml-[13px]"><rect x="5.500" y="2.500" width="11" height="7" /><rect x="7" y="4" width="6" height="4" fill="#eee" /><path d="M0 3h4v3H0zM2 6v3h3M1 3V0M3 3V0" /></svg>
          <svg width="14" height="12" viewBox="0 0 14 12" fill="none" stroke="#ddd" className="ml-[8px]"><path d="M1 11c0-5 4-10 10-10M4 11c0-3 3-7 7-7M7 11c0-2 2-4 4-4" /><circle cx="11" cy="10.500" r="1.200" fill="#eee" /></svg>
          <svg width="16" height="12" viewBox="0 0 16 12" fill="none" stroke="#eee" className="ml-[4px]"><path d="M1 4h3l4-3v10L4 8H1zM10 3c1.500 2 1.500 4 0 6M12.500 1c2.500 3 2.500 7 0 10" /></svg>
          <svg width="23" height="13" viewBox="0 0 23 13" fill="none" stroke="#eee" className="ml-[7px]"><rect x="0.500" y="0.500" width="22" height="12" /><path d="M3 4h17M3 6.500h17" strokeDasharray="1 1" /><path d="M6 9.500h11" /></svg>
          <span className="ml-[12px] text-[13px] text-[#eee]">英</span>
          <svg width="16" height="16" viewBox="0 0 16 16" className="ml-[13px]"><rect x="1" y="1" width="14" height="14" rx="2" fill="#e8481c" transform="rotate(-12 8 8)" /><path d="M11 5H6.500c-1.500 0-1.500 3 0 3h3c1.500 0 1.500 3 0 3H5" stroke="#fff" strokeWidth="1.800" fill="none" /></svg>
        </div>
        <div className="ml-[14px] w-[60px] shrink-0 flex flex-col items-end text-[12px] leading-[18px] text-[#e4e4e4] whitespace-nowrap">
          <span className="pr-[12px]">10:24</span>
          <span>2018/8/17</span>
        </div>
        <div className="ml-auto w-[69px] h-full bg-black flex items-center justify-center relative shrink-0">
          <svg width="20" height="20" viewBox="0 0 20 20" className="ml-[6px]"><path d="M1 1h15v12H8l-3 3v-3H1z" fill="#fff" /><path d="M4 4h9M4 7h9M4 10h5" stroke="#000" /></svg>
          <span className="absolute left-[35px] top-[19px] w-[16px] h-[16px] rounded-full bg-[#3a3a3a] border border-[#888] text-[11px] leading-[14px] text-center font-bold text-white">1</span>
        </div>
      </div>

      {/* floating IME bar */}
      <div className="absolute left-[867px] top-[33px] flex items-center h-[27px]">
        <svg width="30" height="27" viewBox="0 0 30 27" className="shrink-0 relative z-10"><rect x="2" y="2" width="25" height="23" rx="3" fill="#e8481c" transform="rotate(-10 14 13)" /><path d="M21 8H11c-3 0-3 6 0 6h7c3 0 3 6 0 6H8" stroke="#fff" strokeWidth="3" fill="none" /></svg>
        <div className="w-[179px] h-[23px] -ml-[3px] mt-[3px] bg-white border border-[#aac4dc] flex items-center pl-[5px] text-[#1a70c8]">
          <span className="text-[13px] font-bold w-[17px]">英</span>
          <svg width="16" height="12" viewBox="0 0 16 12" fill="#1a70c8"><circle cx="3" cy="3" r="1.800" /><path d="M10 5c2 0 2 3 0 5 3-1 3-6 0-5z" /></svg>
          <svg width="17" height="17" viewBox="0 0 17 17" fill="none" stroke="#1a70c8" strokeWidth="1.500" className="ml-[10px]"><circle cx="8.500" cy="8.500" r="7" /><circle cx="6" cy="7" r="0.500" /><circle cx="11" cy="7" r="0.500" /><path d="M5 10.500c2 2 5 2 7 0" /></svg>
          <svg width="14" height="17" viewBox="0 0 14 17" fill="#1a70c8" className="ml-[6px]"><rect x="4" y="0" width="6" height="11" rx="3" /><path d="M1 8c0 6 12 6 12 0" fill="none" stroke="#1a70c8" /><rect x="6" y="13" width="2" height="3" /><rect x="3" y="15.500" width="8" height="1.500" /></svg>
          <svg width="17" height="12" viewBox="0 0 17 12" className="ml-[7px]"><rect width="17" height="12" rx="1" fill="#1a70c8" /><path d="M2 3h13M2 6h13" stroke="#fff" strokeDasharray="1.500 1" /><path d="M4 9h9" stroke="#fff" /></svg>
          <svg width="18" height="15" viewBox="0 0 18 15" fill="#a8bccf" className="ml-[7px]"><circle cx="6" cy="4" r="3" /><path d="M0 13c0-4 3-5 6-5s5 1 6 2v3z" /><rect x="8" y="9" width="10" height="6" fill="#8ea6bc" /></svg>
          <svg width="15" height="14" viewBox="0 0 15 14" fill="#1a70c8" className="ml-[6px]"><path d="M4 0l3.500 1L11 0l4 3-2 3-1-1v9H3V5L2 6 0 3z" /></svg>
          <svg width="15" height="15" viewBox="0 0 15 15" fill="none" stroke="#1a70c8" strokeWidth="2.600" className="ml-[6px]"><path d="M1 14l7-7" /><path d="M8 7c-1-3 2-6 5-5l-2 2 1 2 2-1c0 3-3 5-6 2z" fill="#1a70c8" strokeWidth="0.800" /></svg>
        </div>
      </div>

      {/* floating badge */}
      <div className="absolute left-[700px] -top-[30px] w-[47px] h-[48px] rounded-full bg-[#44c25a] border-2 border-[#c2c2c2] flex items-end justify-center pb-[2px] text-[11px] leading-[12px] font-bold text-white">74</div>
    </div>
  );
}
